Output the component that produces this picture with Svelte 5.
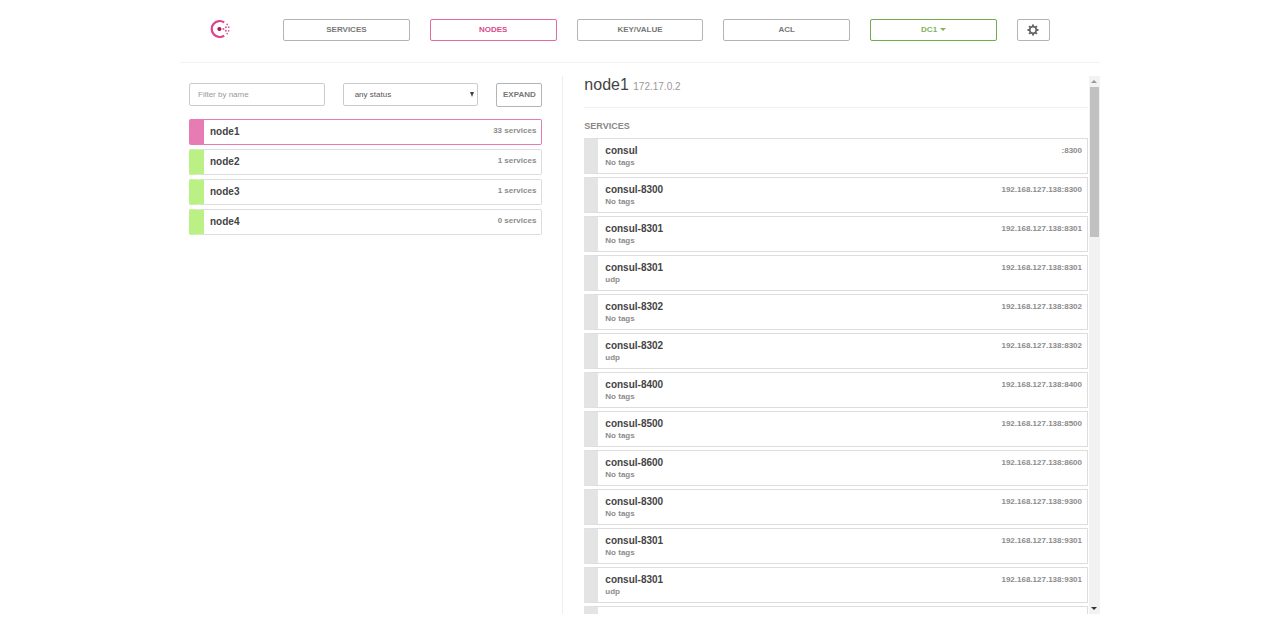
<script lang="ts">
	interface Node {
		name: string;
		services: number;
	}

	interface Service {
		name: string;
		tags: string;
		address: string;
	}

	const tabs = ['Services', 'Nodes', 'Key/Value', 'ACL'];

	const nodes: Node[] = [
		{ name: 'node1', services: 33 },
		{ name: 'node2', services: 1 },
		{ name: 'node3', services: 1 },
		{ name: 'node4', services: 0 }
	];

	const services: Service[] = [
		{ name: 'consul', tags: '', address: ':8300' },
		{ name: 'consul-8300', tags: '', address: '192.168.127.138:8300' },
		{ name: 'consul-8301', tags: '', address: '192.168.127.138:8301' },
		{ name: 'consul-8301', tags: 'udp', address: '192.168.127.138:8301' },
		{ name: 'consul-8302', tags: '', address: '192.168.127.138:8302' },
		{ name: 'consul-8302', tags: 'udp', address: '192.168.127.138:8302' },
		{ name: 'consul-8400', tags: '', address: '192.168.127.138:8400' },
		{ name: 'consul-8500', tags: '', address: '192.168.127.138:8500' },
		{ name: 'consul-8600', tags: '', address: '192.168.127.138:8600' },
		{ name: 'consul-8300', tags: '', address: '192.168.127.138:9300' },
		{ name: 'consul-8301', tags: '', address: '192.168.127.138:9301' },
		{ name: 'consul-8301', tags: 'udp', address: '192.168.127.138:9301' }
	];

	let activeTab = $state('Nodes');
	let selected = $state('node1');
	let filter = $state('');
	let status = $state('any status');

	const visibleNodes = $derived(nodes.filter((n) => n.name.includes(filter)));
</script>

<div class="page">
	<header class="topbar">
		<a class="logo" href="#/" aria-label="Consul">
			<svg width="20" height="20" viewBox="0 0 20 20">
				<path d="M14.2 3.4A8 8 0 1 0 14.2 16.6" fill="none" stroke="#e0408f" stroke-width="2.2" />
				<circle cx="9.4" cy="10" r="2.1" fill="#a01d56" />
				<g fill="#dc5a98">
					<circle cx="13.4" cy="10" r="1.1" />
					<circle cx="15.9" cy="8.2" r="1" />
					<circle cx="15.9" cy="11.8" r="1" />
					<circle cx="18.7" cy="8.2" r="0.9" />
					<circle cx="18.7" cy="11.8" r="0.9" />
					<circle cx="17.2" cy="5.4" r="0.9" />
					<circle cx="17.2" cy="14.6" r="0.9" />
				</g>
			</svg>
		</a>
		<nav class="tabs">
			{#each tabs as tab}
				<a href="#/" class="btn tab" class:active={tab === activeTab} onclick={() => (activeTab = tab)}>{tab}</a>
			{/each}
			<button type="button" class="btn tab dc">dc1 <span class="caret"></span></button>
			<button type="button" class="btn settings" aria-label="Settings">
				<svg width="12" height="12" viewBox="0 0 12 12">
					<circle cx="6" cy="6" r="3.3" fill="none" stroke="#666" stroke-width="1.7" />
					<g stroke="#666" stroke-width="2">
						<path d="M6 0.5V2.2M6 9.8V11.5M0.5 6H2.2M9.8 6H11.5" />
						<path d="M2.1 2.1L3.3 3.3M8.7 8.7L9.9 9.9M2.1 9.9L3.3 8.7M8.7 3.3L9.9 2.1" />
					</g>
				</svg>
			</button>
		</nav>
	</header>

	<main class="columns">
		<section class="list-pane">
			<form class="filters" onsubmit={(e) => e.preventDefault()}>
				<div class="control">
					<input type="text" class="field" placeholder="Filter by name" aria-label="Filter by name" bind:value={filter} />
				</div>
				<div class="control">
					<select class="field" aria-label="Status" bind:value={status}>
						<option>any status</option>
						<option>passing</option>
						<option>failing</option>
					</select>
					<span class="arrow"></span>
				</div>
				<button type="button" class="btn expand">Expand</button>
			</form>
			<div class="nodes">
				{#each visibleNodes as node}
					<a href="#/" class="node" class:active={node.name === selected} onclick={() => (selected = node.name)}>
						<span class="name">{node.name}</span>
						<span class="meta">{node.services} services</span>
					</a>
				{/each}
			</div>
		</section>

		<section class="detail-pane">
			<div class="detail">
				<h3>node1 <small>172.17.0.2</small></h3>
				<h5>Services</h5>
				<div class="services">
					{#each services as service}
						<a href="#/" class="service">
							<div>
								<div class="name">{service.name}</div>
								<div class="meta">{service.tags || 'No tags'}</div>
							</div>
							<span class="meta">{service.address}</span>
						</a>
					{/each}
					<!-- placeholder until the next batch is loaded -->
					<div class="service"></div>
				</div>
			</div>
			<div class="scrollbar" aria-hidden="true">
				<span class="step up"></span>
				<div class="track"><div class="thumb"></div></div>
				<span class="step down"></span>
			</div>
		</section>
	</main>
</div>

<style>
	:global(body) {
		background: #fff;
		font-family: 'Liberation Sans', Arial, sans-serif;
		font-size: 8px;
		color: #444;
	}

	.page {
		max-width: 920px;
		margin: 0 auto;
	}

	.page * {
		box-sizing: border-box;
	}

	a {
		color: inherit;
		text-decoration: none;
	}

	.topbar {
		display: flex;
		align-items: center;
		gap: 53px;
		padding: 19px 50px 21px 30px;
		border-bottom: 1px solid #f3f3f3;
	}

	.logo {
		display: flex;
		flex: none;
		padding-bottom: 2px;
	}

	.tabs {
		display: flex;
		flex: 1;
		gap: 20px;
	}

	.btn {
		display: flex;
		align-items: center;
		justify-content: center;
		height: 22px;
		padding: 0 0 2px;
		border: 1px solid #b4b4b4;
		border-radius: 2px;
		background: #fff;
		color: #777;
		font: bold 8px 'Liberation Sans', Arial, sans-serif;
		text-transform: uppercase;
		cursor: pointer;
	}

	.tab {
		flex: 1;
	}

	.tab.active {
		border-color: #e4699f;
		color: #dc4a8b;
	}

	.tab.dc {
		gap: 3px;
		border-color: #6fac4b;
		color: #7db45c;
	}

	.caret {
		border: solid transparent;
		border-width: 3px 3px 0;
		border-top-color: #7db45c;
	}

	.settings {
		width: 33px;
		padding: 0;
	}

	.columns {
		display: grid;
		grid-template-columns: 5fr 7fr;
		margin-top: 13px;
		height: calc(100vh - 99px);
	}

	.list-pane {
		min-width: 0;
		padding: 7px 20px 0 9px;
		border-right: 1px solid #eee;
	}

	.filters {
		display: flex;
		align-items: flex-start;
		gap: 18px;
		margin-bottom: 12px;
	}

	.control {
		position: relative;
		flex: 1;
		min-width: 0;
	}

	.field {
		display: block;
		width: 100%;
		height: 23px;
		padding: 0 8px;
		border: 1px solid #ccc;
		border-radius: 2px;
		background: #fff;
		color: #555;
		font: 8px 'Liberation Sans', Arial, sans-serif;
	}

	.field::placeholder {
		color: #999;
	}

	select.field {
		appearance: none;
		padding-left: 11px;
	}

	.arrow {
		position: absolute;
		top: 9px;
		right: 4px;
		border: solid transparent;
		border-width: 5px 2px 0;
		border-top-color: #444;
		pointer-events: none;
	}

	.expand {
		width: 46px;
		height: 24px;
	}

	.nodes {
		display: grid;
		gap: 4px;
	}

	.node {
		display: flex;
		justify-content: space-between;
		height: 26px;
		padding: 0 5px 0 6px;
		border: 1px solid #ddd;
		border-left: 15px solid #bbf085;
		border-radius: 2px;
		line-height: 24px;
	}

	.node .meta {
		line-height: 22px;
	}

	.node.active {
		border-color: #e77bb3;
	}

	.name {
		color: #444;
		font-size: 10px;
		font-weight: bold;
	}

	.meta {
		color: #8c8c8c;
		font-weight: bold;
	}

	.detail-pane {
		display: flex;
		min-width: 0;
		min-height: 0;
		padding-left: 21px;
	}

	.detail {
		flex: 1;
		overflow-y: auto;
		scrollbar-width: none;
	}

	h3 {
		margin: 0 0 12px;
		padding-bottom: 11px;
		border-bottom: 1px solid #f1f1f1;
		color: #444;
		font-size: 16px;
		font-weight: normal;
		line-height: 18px;
	}

	h3 small {
		color: #999;
		font-size: 10px;
	}

	h5 {
		margin: 0 0 6px;
		color: #888;
		font-size: 9px;
		line-height: 12px;
		text-transform: uppercase;
	}

	.services {
		display: grid;
		gap: 3px;
	}

	.service {
		display: flex;
		justify-content: space-between;
		height: 36px;
		padding: 6px 5px 0 7px;
		border: 1px solid #ddd;
		border-left: 14px solid #e4e4e4;
		line-height: 12px;
	}

	.service > .meta {
		line-height: 11px;
	}

	.scrollbar {
		display: flex;
		flex: none;
		flex-direction: column;
		width: 11px;
		margin-left: 1px;
		background: #f2f2f2;
	}

	.step {
		display: flex;
		align-items: center;
		justify-content: center;
		height: 11px;
	}

	.step::before {
		content: '';
		border: solid transparent;
	}

	.up::before {
		border-width: 0 3px 3px;
		border-bottom-color: #999;
	}

	.down::before {
		border-width: 3px 3px 0;
		border-top-color: #333;
	}

	.track {
		flex: 1;
		padding: 0 1px;
	}

	.thumb {
		height: 29%;
		background: #c1c1c1;
	}
</style>
